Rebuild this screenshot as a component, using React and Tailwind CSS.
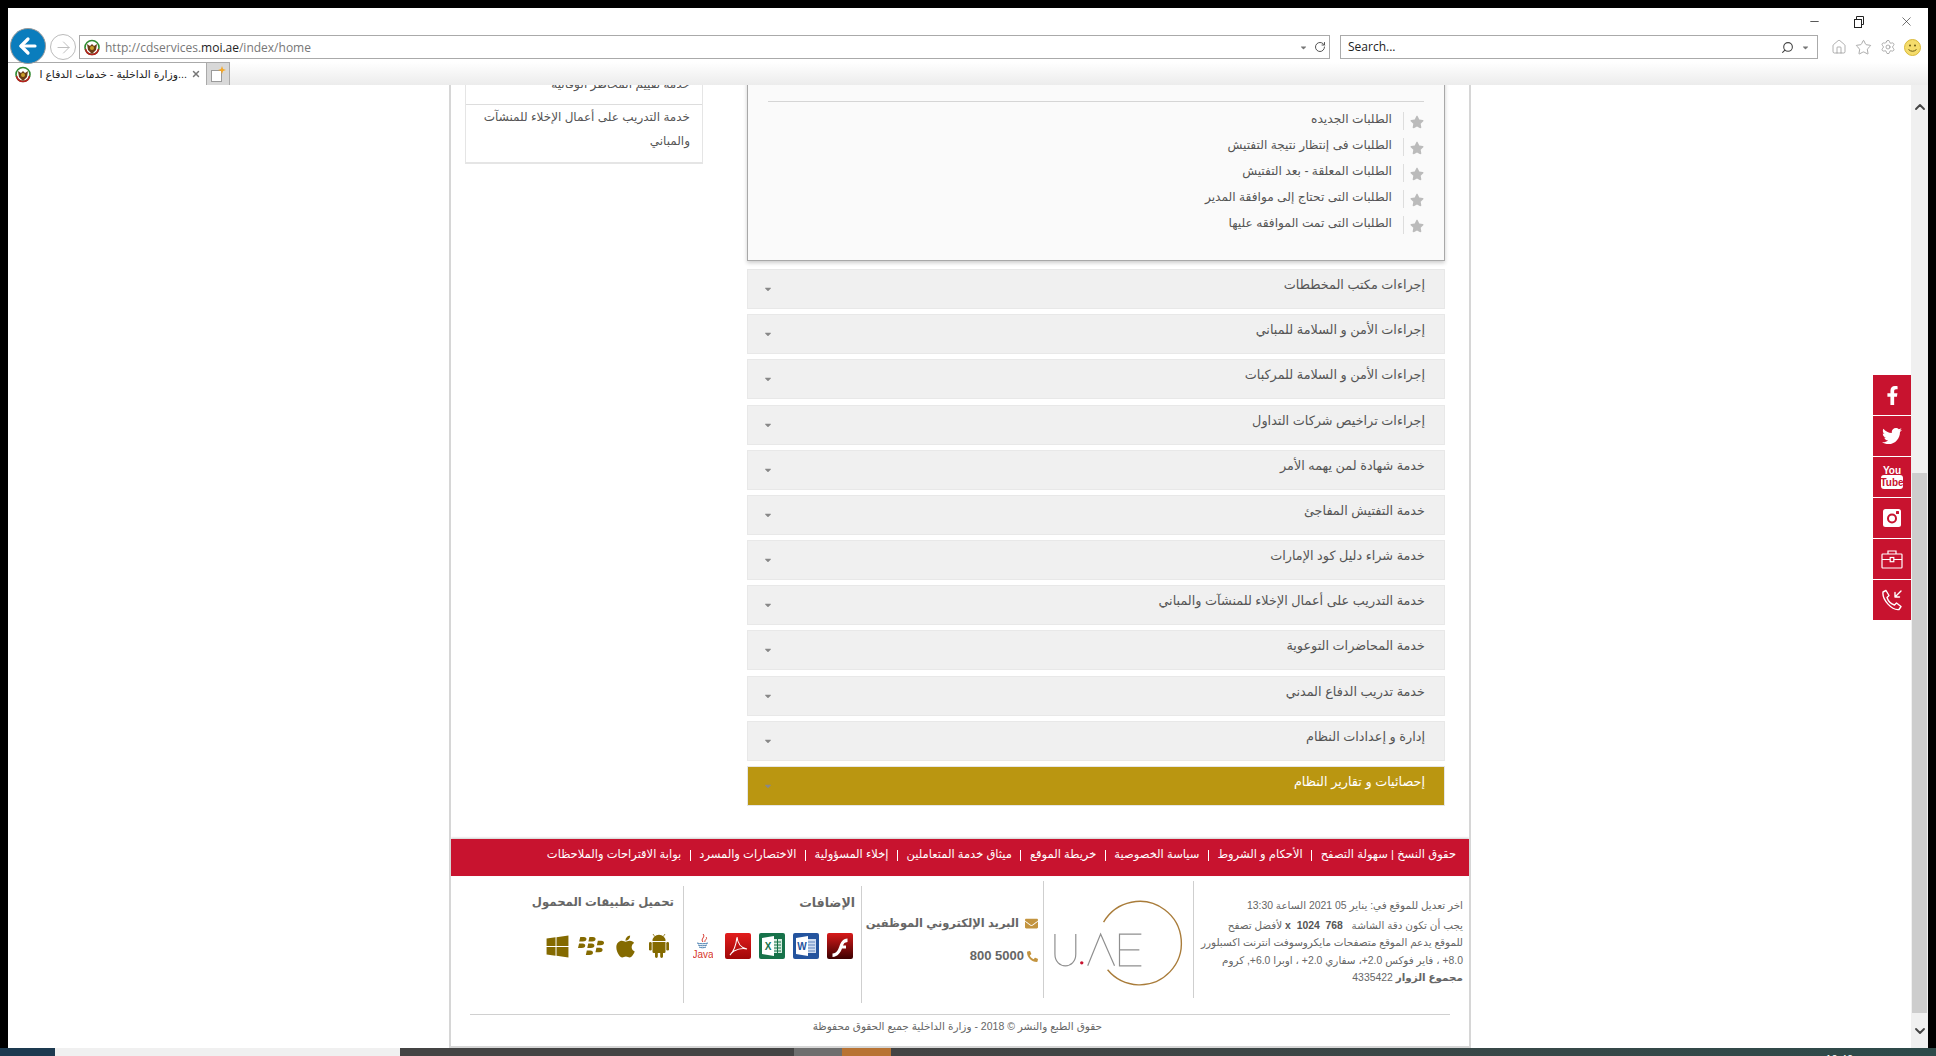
import { ArrowLeft, ArrowRight, Home, Star, Settings, RotateCw, Search, Minus, X, ChevronUp, ChevronDown } from 'lucide-react';
import { FaFacebookF, FaTwitter, FaStar, FaEnvelope, FaPhone, FaApple, FaBlackberry, FaWindows, FaCaretDown } from 'react-icons/fa';

const requests = [
  'الطلبات الجديده',
  'الطلبات فى إنتظار نتيجة التفتيش',
  'الطلبات المعلقة - بعد التفتيش',
  'الطلبات التى تحتاج إلى موافقة المدير',
  'الطلبات التى تمت الموافقه عليها',
];

const sections = [
  'إجراءات مكتب المخططات',
  'إجراءات الأمن و السلامة للمباني',
  'إجراءات الأمن و السلامة للمركبات',
  'إجراءات تراخيص شركات التداول',
  'خدمة شهادة لمن يهمه الأمر',
  'خدمة التفتيش المفاجئ',
  'خدمة شراء دليل كود الإمارات',
  'خدمة التدريب على أعمال الإخلاء للمنشآت والمباني',
  'خدمة المحاضرات التوعوية',
  'خدمة تدريب الدفاع المدني',
  'إدارة و إعدادات النظام',
];

const links = [
  'حقوق النسخ | سهولة التصفح',
  'الأحكام و الشروط',
  'سياسة الخصوصية',
  'خريطة الموقع',
  'ميثاق خدمة المتعاملين',
  'إخلاء المسؤولية',
  'الاختصارات والمسرد',
  'بوابة الاقتراحات والملاحظات',
];

function Favicon() {
  return (
    <svg width="16" height="17" viewBox="0 0 16 17">
      <circle cx="8" cy="8.5" r="7" fill="#fff" stroke="#2f8a2f" strokeWidth="1.6" />
      <path d="M1.5 10 A7 7 0 0 0 8 15.5 A7 7 0 0 0 14.5 10" fill="none" stroke="#b5211f" strokeWidth="1.6" />
      <path d="M3 5 L6 7 L8 5 L10 7 L13 5 L12 11 L8 15 L4 11 Z" fill="#6b3d16" />
      <circle cx="8" cy="9" r="2" fill="#c9a02c" />
    </svg>
  );
}

function Smiley() {
  return (
    <svg width="17" height="17" viewBox="0 0 17 17">
      <circle cx="8.5" cy="8.5" r="8" fill="#f5dc6b" stroke="#d9b93a" />
      <circle cx="6" cy="6.5" r="1" fill="#6b5a12" />
      <circle cx="11" cy="6.5" r="1" fill="#6b5a12" />
      <path d="M4.5 10.5 Q8.5 14 12.5 10.5" fill="none" stroke="#6b5a12" />
    </svg>
  );
}

function NewTabIcon() {
  return (
    <svg width="16" height="17" viewBox="0 0 16 17">
      <rect x="1.5" y="4.5" width="10" height="11" fill="#fff" stroke="#9a9a9a" />
      <path d="M12 0 L13 3 L16 4 L13 5 L12 8 L11 5 L8 4 L11 3 Z" fill="#f5a623" />
    </svg>
  );
}

function YoutubeIcon() {
  return (
    <svg width="22" height="24" viewBox="0 0 22 24" fill="#fff">
      <text x="11" y="9" textAnchor="middle" fontSize="10" fontWeight="700" fontFamily="Liberation Sans Narrow, Liberation Sans, sans-serif">You</text>
      <rect x="0" y="10" width="22" height="14" rx="3" />
      <text x="11" y="21" textAnchor="middle" fontSize="10" fontWeight="700" fill="#c8132f" fontFamily="Liberation Sans, sans-serif">Tube</text>
    </svg>
  );
}

function InstagramIcon() {
  return (
    <svg width="20" height="20" viewBox="0 0 20 20">
      <rect width="18" height="18" x="1" y="1" rx="2.5" fill="#fff" />
      <circle cx="10" cy="10.5" r="5" fill="#c8132f" />
      <circle cx="10" cy="10.5" r="3" fill="#fff" />
      <rect x="14" y="3" width="3" height="3" rx="0.6" fill="#c8132f" />
    </svg>
  );
}

function BriefcaseIcon() {
  return (
    <svg width="22" height="20" viewBox="0 0 22 20" fill="none" stroke="#fff" strokeWidth="1.2">
      <rect x="1" y="5" width="20" height="14" rx="0.8" />
      <path d="M7 5 V2 H15 V5 M1 10.5 H9 M13 10.5 H21" />
      <rect x="9.2" y="8.5" width="3.6" height="4.2" />
    </svg>
  );
}

function CallIcon() {
  return (
    <svg width="22" height="22" viewBox="0 0 22 22" fill="none" stroke="#fff" strokeWidth="1.4" strokeLinecap="round" strokeLinejoin="round">
      <path d="M2 3 L5 1.5 L8 6.5 L6 8.5 C7 11.5 10 15 13.5 16 L15.5 14 L20 17.5 L18 20.5 C11 21.5 1 11 2 3 Z" />
      <path d="M20 2 L14 8 M14 3.5 V8 H18.5" />
    </svg>
  );
}

function AndroidIcon() {
  return (
    <svg width="20" height="24" viewBox="0 0 20 24" fill="#846a00" className="mr-[5px]">
      <path d="M3.5 7 A6.5 6.2 0 0 1 16.5 7 Z" />
      <path d="M5.5 2.2 L4 0 M14.5 2.2 L16 0" stroke="#846a00" strokeWidth="0.8" />
      <path d="M3.5 8 H16.5 V18 A1.2 1.2 0 0 1 15.3 19 H14 V22.5 A1.4 1.4 0 0 1 11.2 22.5 V19 H8.8 V22.5 A1.4 1.4 0 0 1 6 22.5 V19 H4.7 A1.2 1.2 0 0 1 3.5 18 Z" />
      <rect x="0" y="8" width="2.7" height="8.5" rx="1.35" />
      <rect x="17.3" y="8" width="2.7" height="8.5" rx="1.35" />
    </svg>
  );
}

function FlashIcon() {
  return (
    <svg width="26" height="26" viewBox="0 0 26 26">
      <defs>
        <linearGradient id="flashFill" x1="0" y1="0" x2="0" y2="1">
          <stop offset="0" stopColor="#d81a1a" />
          <stop offset="1" stopColor="#3c0000" />
        </linearGradient>
      </defs>
      <rect width="26" height="26" rx="2" fill="url(#flashFill)" />
      <path d="M5.5 20.5 C10 20 11 17 12.5 13 C14 9 15.5 6 20.5 5.5 V9 C17.5 9.3 16.8 10.5 16 12.5 H19 V15.5 H15 C13.5 19.5 11 23.5 5.5 24 Z" fill="#fff" />
    </svg>
  );
}

function WordIcon() {
  return (
    <svg width="26" height="26" viewBox="0 0 26 26">
      <rect width="26" height="26" rx="2" fill="#24549e" />
      <rect x="14" y="6" width="9" height="14" fill="#cfdcf0" />
      <path d="M15 9 H22 M15 12 H22 M15 15 H22 M15 18 H22" stroke="#5f84bd" strokeWidth="1" />
      <path d="M3 5 L15 3 V23 L3 21 Z" fill="#fff" />
      <text x="9" y="17" textAnchor="middle" fontSize="10" fontWeight="700" fill="#24549e" fontFamily="Liberation Sans, sans-serif">W</text>
    </svg>
  );
}

function ExcelIcon() {
  return (
    <svg width="26" height="26" viewBox="0 0 26 26">
      <rect width="26" height="26" rx="2" fill="#17724a" />
      <rect x="14" y="6" width="9" height="14" fill="#d5ecdf" />
      <path d="M15 9 H22 M15 12 H22 M15 15 H22 M15 18 H22 M18.5 6 V20" stroke="#17724a" strokeWidth="1" />
      <path d="M3 5 L15 3 V23 L3 21 Z" fill="#fff" />
      <text x="9" y="17" textAnchor="middle" fontSize="10" fontWeight="700" fill="#17724a" fontFamily="Liberation Sans, sans-serif">X</text>
    </svg>
  );
}

function PdfIcon() {
  return (
    <svg width="26" height="26" viewBox="0 0 26 26">
      <defs>
        <linearGradient id="pdfFill" x1="0" y1="0" x2="0" y2="1">
          <stop offset="0" stopColor="#e21d1d" />
          <stop offset="1" stopColor="#a00808" />
        </linearGradient>
      </defs>
      <rect width="26" height="26" rx="2" fill="url(#pdfFill)" />
      <path d="M5 22 C8 19 11 13 12 4 C12.5 10 16 15 22 16 C18 15 13 16 9 18 C7.5 19 6 20.5 5 22 Z" fill="none" stroke="#fff" strokeWidth="1.1" />
    </svg>
  );
}

function JavaIcon() {
  return (
    <svg width="20" height="26" viewBox="0 0 20 26" className="mr-[4px]">
      <path d="M10 1 C13 4 7 6 10 9 M13 4 C15 6 11 7 12 9" fill="none" stroke="#d6362c" strokeWidth="1" />
      <path d="M4 10 C7 11 12 11 15 10 M5 12 C8 13 11 13 14 12 M6 14 C8 15 11 15 13 14" fill="none" stroke="#4a7fb0" strokeWidth="1" />
      <text x="10" y="25" textAnchor="middle" fontSize="10" fill="#d6362c" fontFamily="Liberation Sans Narrow, Liberation Sans, sans-serif">Java</text>
    </svg>
  );
}

function UaeLogo() {
  return (
    <svg width="150" height="117" viewBox="0 0 150 117" fill="none" className="mt-[2px]">
      <path d="M60 39 A42 42 0 1 1 64 87" stroke="#a97c3a" strokeWidth="1.4" />
      <path d="M11 51 V71 C11 87 32 87 32 71 V51" stroke="#8f8f8f" strokeWidth="1.2" />
      <circle cx="38" cy="80" r="1.7" fill="#c8132f" />
      <path d="M44 83 L57 51 L71 83" stroke="#8f8f8f" strokeWidth="1.2" />
      <path d="M98 51 H76 V83 H98 M76 67 H96" stroke="#8f8f8f" strokeWidth="1.2" />
    </svg>
  );
}

function SocialBox({ children }) {
  return <div className="w-[38px] h-10 bg-[#c8132f] flex items-center justify-center text-white">{children}</div>;
}

function Section({ title, active }) {
  return (
    <div className={`h-10 border flex items-start justify-between pr-[19px] pl-[15px] ${active ? 'bg-[#ba9611] border-[#e6e6e6] text-white' : 'bg-[#f0f0f0] border-[#e8e8e8] text-[#555]'}`}>
      <span className="mt-[14px] text-[#888]"><FaCaretDown size={10} /></span>
      <span dir="rtl" className="text-[12.8px] leading-[20px] mt-[5px]">{title}</span>
    </div>
  );
}

export default function App() {
  return (
    <div className="w-[1936px] h-screen overflow-hidden bg-black flex flex-col font-['Liberation_Sans','DejaVu_Sans',sans-serif]">
      <div className="flex-1 min-h-0 pt-2 px-2">
        <div className="relative h-full bg-white flex flex-col">
          {/* window buttons */}
          <div className="h-[27px] flex justify-end items-center text-[#222] shrink-0">
            <Minus size={13} strokeWidth={1.4} className="mr-[32px]" />
            <svg width="12" height="12" viewBox="0 0 12 12" fill="none" stroke="#222" className="mr-[34px]">
              <rect x="1.5" y="3.5" width="7" height="8" />
              <path d="M3.5 3.5 V0.5 H10.5 V8.5 H8.5" />
            </svg>
            <X size={15} strokeWidth={1} className="mr-[14px]" />
          </div>

          {/* address bar */}
          <div className="h-6 flex items-center shrink-0">
            <div className="ml-[42px] w-[26px] h-[26px] rounded-full border border-[#bbb] flex items-center justify-center text-[#bbb]">
              <ArrowRight size={19} strokeWidth={1.2} />
            </div>
            <div className="ml-[3px] w-[1251px] h-6 border border-[#aaa] flex items-center pl-[4px]">
              <Favicon />
              <span className="ml-[5px] mt-px text-[12px] text-[#777] font-['Open_Sans']">http://cdservices.<span className="text-[#222]">moi.ae</span>/index/home</span>
              <span className="ml-auto text-[#777]"><FaCaretDown size={9} /></span>
              <RotateCw size={12} className="ml-[6px] mr-[3px] text-[#555]" />
            </div>
            <div className="ml-[10px] w-[478px] h-6 border border-[#aaa] flex items-center pl-[7px] pr-[7px]">
              <span className="text-[12px] text-[#222] font-['Open_Sans']">Search...</span>
              <Search size={13} className="ml-auto -scale-x-100 text-[#444]" />
              <span className="ml-[7px] text-[#777]"><FaCaretDown size={9} /></span>
            </div>
            <Home size={16} strokeWidth={1} className="ml-[13px] text-[#888]" />
            <Star size={17} strokeWidth={1} className="ml-[8px] text-[#888]" />
            <Settings size={16} strokeWidth={1} className="ml-[8px] text-[#888]" />
            <span className="ml-[8px]"><Smiley /></span>
          </div>

          {/* back button sits over the tab row */}
          <div className="absolute left-[2px] top-[20px] w-9 h-9 rounded-full bg-[#0a7dbd] border border-[#9a9a9a] flex items-center justify-center text-white">
            <ArrowLeft size={24} strokeWidth={3.2} />
          </div>

          {/* tabs */}
          <div className="mt-[3px] h-[23px] flex bg-gradient-to-b from-white to-[#ececec] shrink-0">
            <div className="w-[199px] border-t border-r border-[#aaa] bg-white flex items-center pl-[7px] pr-[5px]">
              <Favicon />
              <span dir="rtl" className="ml-[5px] flex-1 text-right text-[10.8px] text-[#222] whitespace-nowrap">...وزارة الداخلية - خدمات الدفاع ا</span>
              <X size={10} strokeWidth={3.5} className="ml-[4px] text-[#777]" />
            </div>
            <div className="w-[23px] bg-[#d8d8d8] border-t border-r border-[#aaa] flex items-center justify-center">
              <NewTabIcon />
            </div>
          </div>

          {/* page */}
          <div className="relative flex-1 min-h-0 flex">
            <div className="flex-1 min-w-0 pl-[441px] h-full overflow-hidden">
              <div className="w-[1022px] h-full border-x-2 border-b-2 border-[#d6d6d6] bg-white flex flex-col justify-end overflow-hidden">
                <div className="flex items-start pl-[14px] pb-[33px] shrink-0">
                  <div className="w-[238px] border border-[#e5e5e5] border-b-2 text-[#555] text-[12px] leading-[24px]" dir="rtl">
                    <div className="h-[43px] pt-[10px] px-[12px] border-b border-[#ddd]">خدمة تقييم المخاطر الوقائية</div>
                    <div className="pr-[12px] pl-[4px] pb-[9px]">خدمة التدريب على أعمال الإخلاء للمنشآت والمباني</div>
                  </div>
                  <div className="w-[698px] ml-[44px]">
                    <div className="bg-[#fafafa] border border-[#a8a8a8] shadow-[0_2px_4px_rgba(0,0,0,0.2)] pt-[39px] pb-[26px] px-[20px]">
                      <div className="border-t border-[#d5d5d5] pt-[10px] flex flex-col gap-2">
                        {requests.map((r) => (
                          <div key={r} className="h-[18px] flex justify-end items-start">
                            <span dir="rtl" className="-mt-px text-[12.2px] leading-[16px] text-[#555]">{r}</span>
                            <span className="ml-[11px] h-[18px] border-l border-[#ddd] pl-[6px] pt-[3px] text-[#bbb]"><FaStar size={14} /></span>
                          </div>
                        ))}
                      </div>
                    </div>
                    <div className="mt-2 flex flex-col gap-[5.2px]">
                      {sections.map((s) => <Section key={s} title={s} />)}
                      <Section title="إحصائيات و تقارير النظام" active />
                    </div>
                  </div>
                </div>

                {/* red links */}
                <div dir="rtl" className="h-[37px] pb-[5px] bg-[#c8132f] text-white text-[11.5px] flex items-center pr-[13px] shrink-0 shadow-[0_-1px_2px_rgba(0,0,0,0.2)]">
                  {links.map((l, i) => (
                    <span key={l} className="flex items-center whitespace-nowrap">
                      {i > 0 && <span className="mx-[8.5px] h-[11px] border-r border-white" />}
                      {l}
                    </span>
                  ))}
                </div>

                {/* footer columns */}
                <div dir="rtl" className="h-[138px] flex items-start shrink-0">
                  <div className="w-[275px] pt-[21px] pr-[6px] text-[10.4px] leading-[17.5px] text-[#666] whitespace-nowrap">
                    <div>اخر تعديل للموقع في: يناير 05 2021 الساعة 13:30</div>
                    <div className="mt-[2px]">يجب أن تكون دقة الشاشة &nbsp;&nbsp;<b className="text-[#555]">768 &nbsp;x&nbsp; 1024</b> لأفضل تصفح</div>
                    <div>للموقع يدعم الموقع متصفحات مايكروسوفت انترنت اكسبلورر</div>
                    <div>8.0+ ، فاير فوكس 2.0+، سفاري 2.0+ ، اوبرا 6.0+, كروم</div>
                    <div><b>مجموع الزوار</b> 4335422</div>
                  </div>
                  <div className="w-[151px] h-[117px] mt-[5px] border-r border-l border-[#cfcfcf] flex justify-center"><UaeLogo /></div>
                  <div className="w-[181px] h-[117px] mt-[5px] pr-[5px] pt-[34px] text-[#666] text-[11.5px] font-bold">
                    <div className="flex items-center gap-[6px] whitespace-nowrap"><FaEnvelope size={13} className="shrink-0 text-[#c3943f]" /> البريد الإلكتروني الموظفين</div>
                    <div className="mt-[14px] text-[13px] flex items-center gap-[3px]"><FaPhone size={11} className="shrink-0 text-[#c3943f] -scale-x-100" /><span dir="ltr">800 5000</span></div>
                  </div>
                  <div className="w-[179px] h-[117px] mt-[10px] border-r border-l border-[#cfcfcf] pr-[6px] pt-[9px] text-[#666]">
                    <div className="text-[12.5px] font-bold leading-[16px]">الإضافات</div>
                    <div className="mt-[22px] pr-[2px] flex items-center gap-2">
                      <FlashIcon />
                      <WordIcon />
                      <ExcelIcon />
                      <PdfIcon />
                      <JavaIcon />
                    </div>
                  </div>
                  <div className="flex-1 mt-[10px] pr-[9px] pt-[8px] text-[#666]">
                    <div className="text-[11.7px] font-bold leading-[16px] whitespace-nowrap">تحميل تطبيقات المحمول</div>
                    <div className="mt-[23px] flex items-center text-[#846a00]">
                      <AndroidIcon />
                      <FaApple size={25} className="mr-[11px]" />
                      <FaBlackberry size={26} className="mr-[9px]" />
                      <FaWindows size={25} className="mr-[8px]" />
                    </div>
                  </div>
                </div>

                <div className="mx-[19px] border-t border-[#d0d0d0] shrink-0" />
                <div dir="rtl" className="h-[31px] pb-[7px] pr-[367px] flex items-center text-[10.5px] text-[#666] shrink-0 whitespace-nowrap">حقوق الطبع والنشر © 2018 - وزارة الداخلية جميع الحقوق محفوظة</div>
              </div>
            </div>

            {/* share buttons float over the page */}
            <div className="absolute right-[17px] top-[290px] flex flex-col gap-px">
              <SocialBox><FaFacebookF size={19} /></SocialBox>
              <SocialBox><FaTwitter size={20} /></SocialBox>
              <SocialBox><YoutubeIcon /></SocialBox>
              <SocialBox><InstagramIcon /></SocialBox>
              <SocialBox><BriefcaseIcon /></SocialBox>
              <SocialBox><CallIcon /></SocialBox>
            </div>

            {/* scrollbar */}
            <div className="w-[17px] shrink-0 bg-[#f0f0f0] flex flex-col text-[#444]">
              <div className="h-[388px] pt-[14px] flex justify-center items-start"><ChevronUp size={16} strokeWidth={2.8} /></div>
              <div className="h-[540px] mx-px bg-[#cdcdcd]" />
              <div className="flex-1 flex justify-center items-center"><ChevronDown size={16} strokeWidth={2.8} /></div>
            </div>
          </div>
        </div>
      </div>

      {/* taskbar, mostly off screen */}
      <div className="h-2 flex shrink-0 overflow-hidden">
        <div className="w-[55px] bg-[#1d3a50]" />
        <div className="w-[345px] bg-[#f0f0f0]" />
        <div className="w-[394px] bg-[#444]" />
        <div className="w-12 bg-[#6e6e6e]" />
        <div className="w-[49px] bg-[#b87333]" />
        <div className="flex-1 bg-gradient-to-r from-[#444] to-[#2d4a4a] flex justify-end pr-[83px]">
          <span className="text-white text-[11px] leading-none pt-[6px]">10:40</span>
        </div>
      </div>
    </div>
  );
}
